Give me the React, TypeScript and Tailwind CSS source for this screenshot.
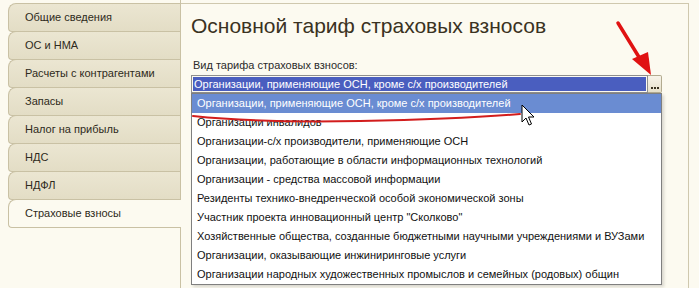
const tabs = [
  'Общие сведения',
  'ОС и НМА',
  'Расчеты с контрагентами',
  'Запасы',
  'Налог на прибыль',
  'НДС',
  'НДФЛ',
];

const items = [
  'Организации, применяющие ОСН, кроме с/х производителей',
  'Организации инвалидов',
  'Организации-с/х производители, применяющие ОСН',
  'Организации, работающие в области информационных технологий',
  'Организации - средства массовой информации',
  'Резиденты технико-внедренческой особой экономической зоны',
  'Участник проекта инновационный центр "Сколково"',
  'Хозяйственные общества, созданные бюджетными научными учреждениями и ВУЗами',
  'Организации, оказывающие инжиниринговые услуги',
  'Организации народных художественных промыслов и семейных (родовых) общин',
];

function Tab({ label, active }: { label: string; active?: boolean }) {
  if (active) {
    return (
      <div className="h-[29px] -mt-px mr-[-1px] flex items-center pl-[16px] bg-[#fcfaf0] border border-r-0 border-[#c9c1a4] rounded-tl-[8px] rounded-bl-[4px] text-[11px] text-[#2e2a20]">
        {label}
      </div>
    );
  }
  return (
    <div className="h-[29px] -mt-px first:mt-0 flex items-center pl-[16px] bg-gradient-to-b from-[#ebe6d2] to-[#e3ddc5] border border-r-0 border-[#c9c1a4] rounded-tl-[8px] rounded-bl-[4px] text-[11px] text-[#2e2a20]">
      {label}
    </div>
  );
}

export default function App() {
  return (
    <div className="relative w-[699px] h-[288px] overflow-hidden bg-[#fcfaf0] flex font-['Liberation_Sans',Arial,sans-serif]">
      <div className="w-[181px] shrink-0 pt-[3px] pl-[8px] flex flex-col border-r border-[#c9c1a4]">
        {tabs.map((t) => (
          <Tab key={t} label={t} />
        ))}
        <Tab label="Страховые взносы" active />
      </div>

      <div className="flex-1 mt-[3px] mr-[10px] border-t border-r border-[#cfc8ae] pt-[10px] pl-[10px]">
        <div className="text-[21px] leading-[24px] text-[#3a3222]">
          Основной тариф страховых взносов
        </div>
        <div className="mt-[21px] pl-[2px] text-[11px] leading-[13px] text-[#2b2b2b]">
          Вид тарифа страховых взносов:
        </div>

        <div className="relative mt-[3px] w-[471px] flex">
          <div className="w-[457px] h-[18px] border border-[#8e8e8e] p-px">
            <div className="h-full bg-[#4a5ebf] text-white text-[11px] leading-[14px] pl-px">
              Организации, применяющие ОСН, кроме с/х производителей
            </div>
          </div>
          <div className="w-[14px] h-[18px] border border-l-0 border-[#b3ab90] bg-gradient-to-b from-[#f7f4ea] to-[#e6e0ca] rounded-r-[2px] flex items-end justify-center pb-[3px]">
            <div className="flex gap-[1px]">
              <span className="w-[2px] h-[2px] bg-[#3a3320]" />
              <span className="w-[2px] h-[2px] bg-[#3a3320]" />
              <span className="w-[2px] h-[2px] bg-[#3a3320]" />
            </div>
          </div>

          <div className="absolute left-0 top-full w-[471px] border border-[#7f7f7f] bg-white shadow-[2px_2px_3px_rgba(0,0,0,0.15)]">
            {items.map((it, i) => (
              <div
                key={it}
                className={
                  i === 0
                    ? 'h-[19px] flex items-center pl-[5px] text-[11px] text-white bg-[#6a8cd2]'
                    : 'h-[19px] flex items-center pl-[5px] text-[11px] text-[#111]'
                }
              >
                {it}
              </div>
            ))}
          </div>
        </div>
      </div>

      <svg className="absolute inset-0 pointer-events-none" width="699" height="288" viewBox="0 0 699 288">
        <path d="M193 116 Q 260 123 360 121 T 520 114" fill="none" stroke="#d21d1d" strokeWidth="2" strokeLinecap="round" />
        <line x1="618" y1="23" x2="642" y2="62" stroke="#e01212" strokeWidth="3.5" strokeLinecap="round" />
        <polygon points="651,75 632,59 648,52" fill="#e01212" />
        <path
          d="M522 105 L522 122 L526 118 L529 125 L531.5 124 L528.5 117 L534 117 Z"
          fill="#fff"
          stroke="#000"
          strokeWidth="1"
          strokeLinejoin="round"
        />
      </svg>
    </div>
  );
}
